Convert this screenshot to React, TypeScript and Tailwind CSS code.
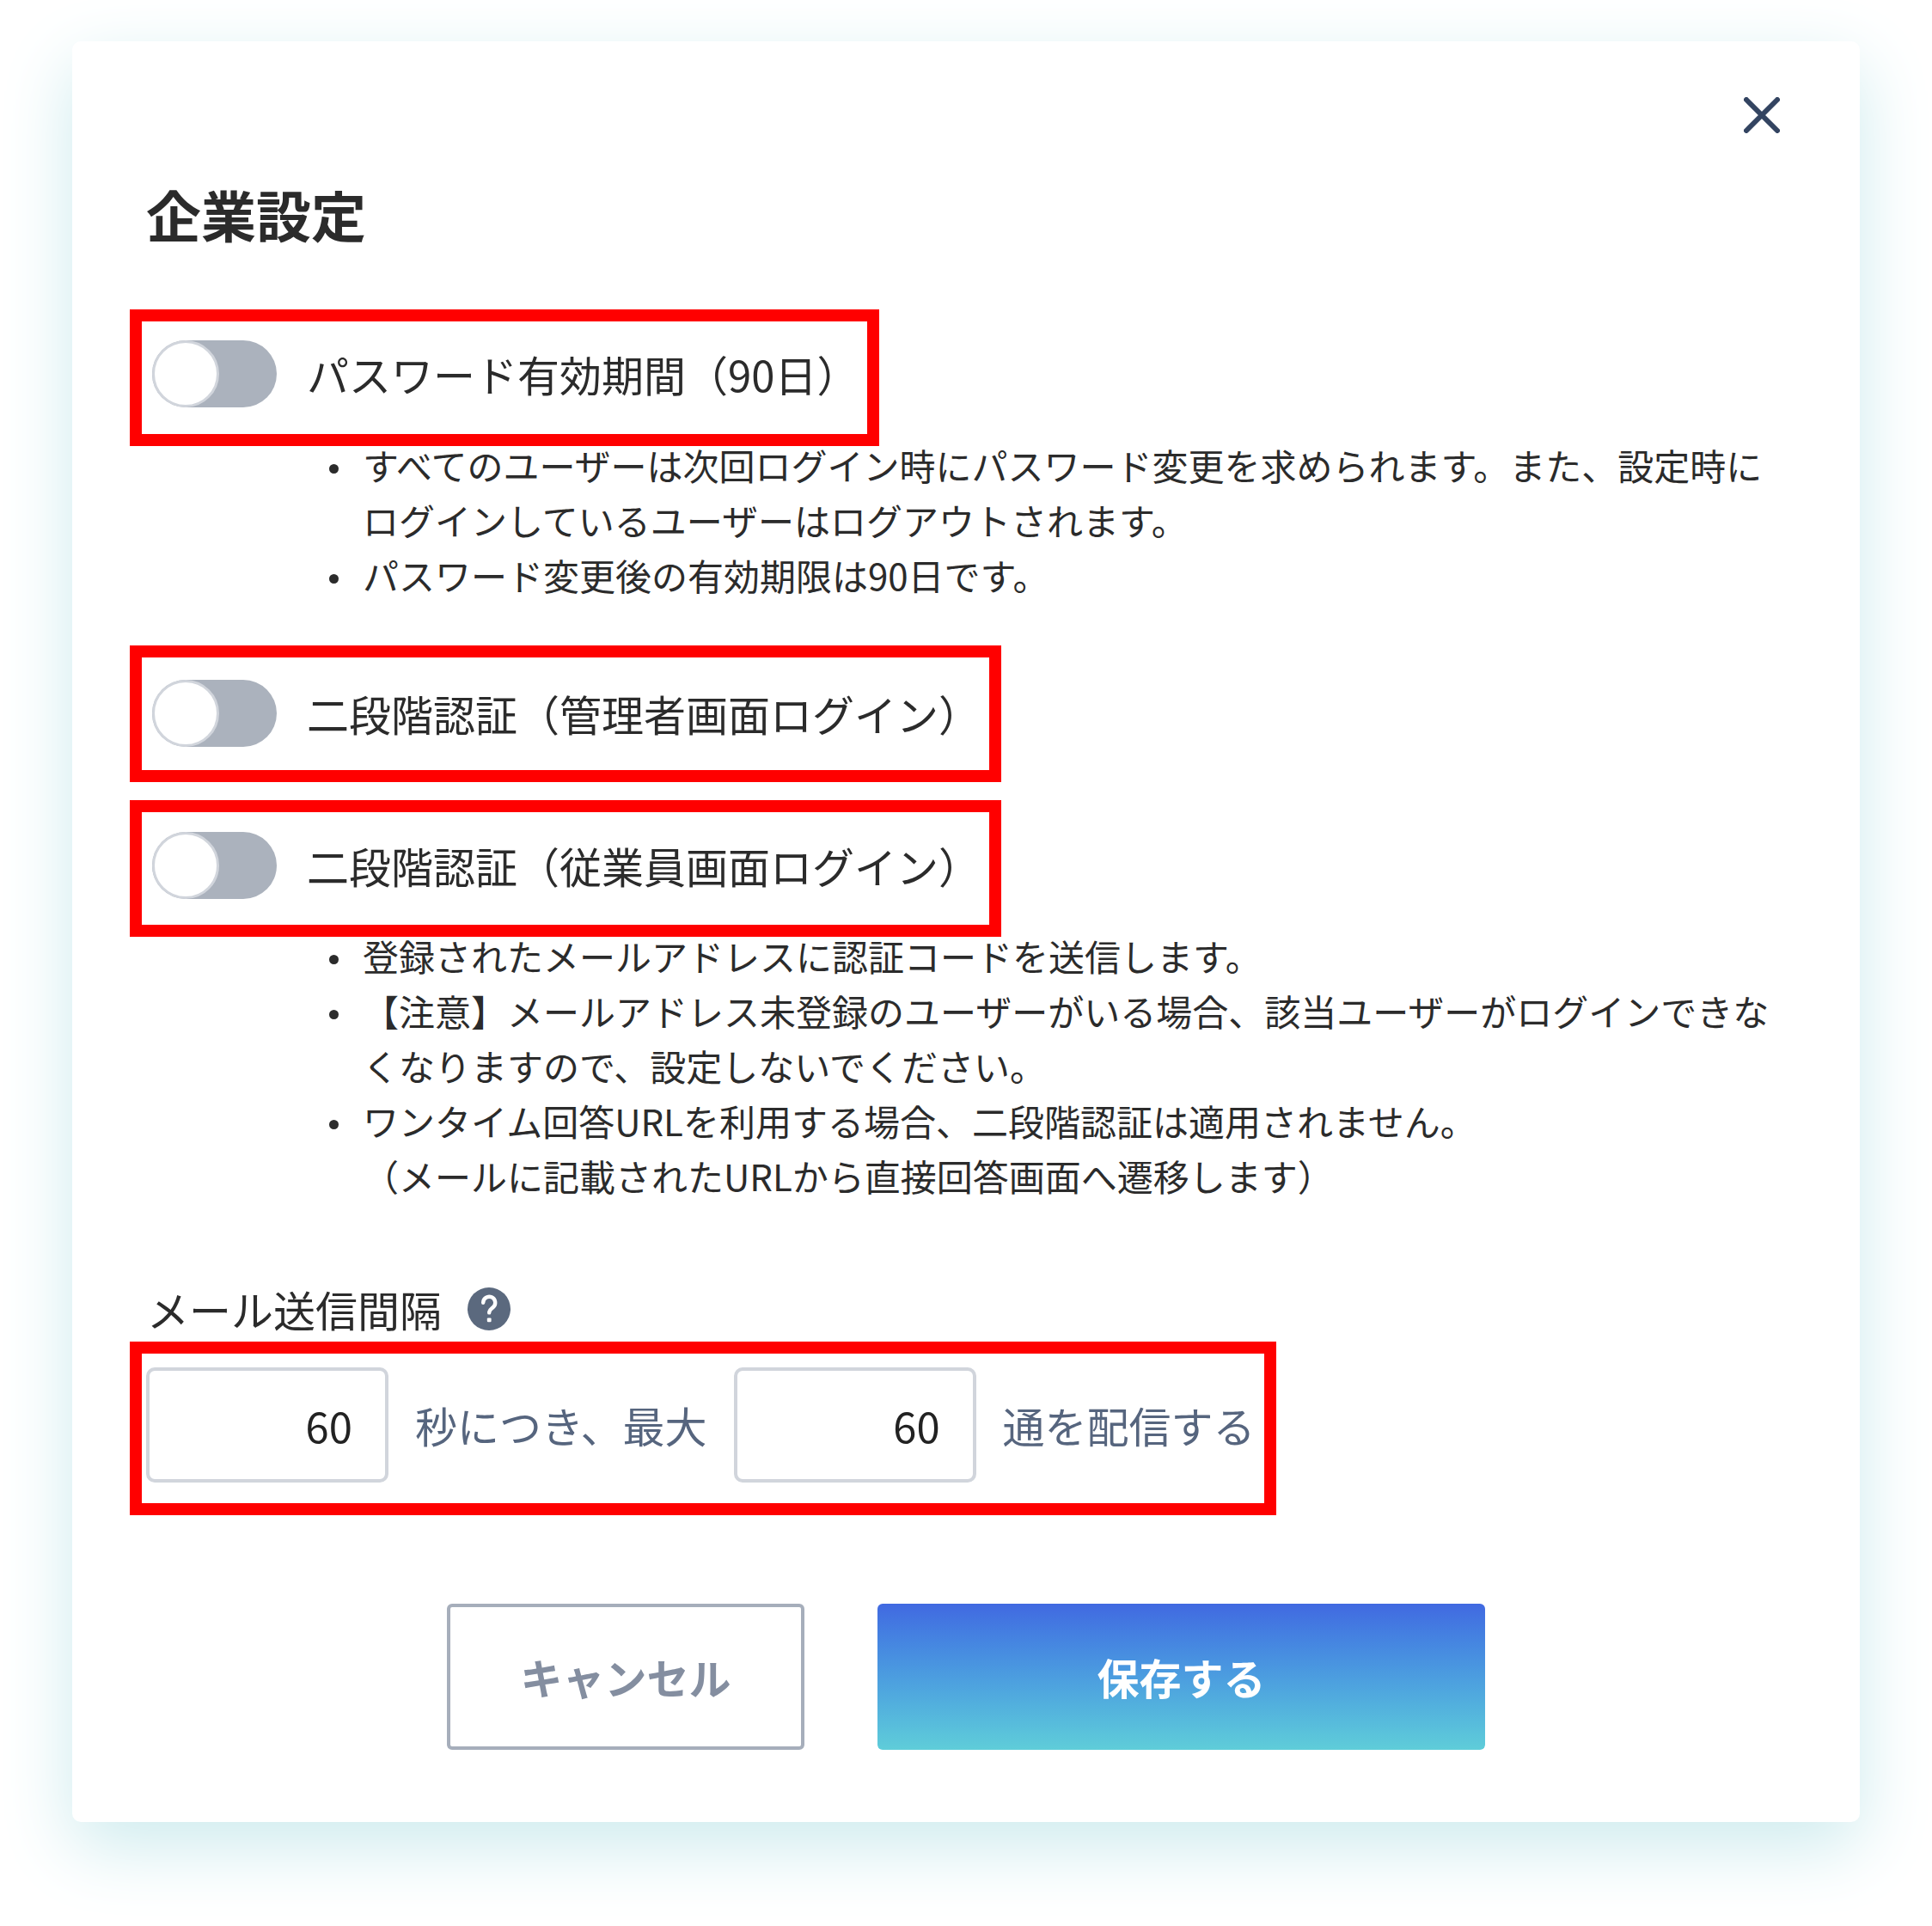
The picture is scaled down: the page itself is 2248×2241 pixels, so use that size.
import { ReactNode } from 'react';

interface SwitchRowProps {
  id: string;
  label: string;
  className: string;
}

interface NumberFieldProps {
  id: string;
  label: string;
  defaultValue: number;
}

const PASSWORD_NOTES = [
  'すべてのユーザーは次回ログイン時にパスワード変更を求められます。また、設定時にログインしているユーザーはログアウトされます。',
  'パスワード変更後の有効期限は90日です。',
];

const TWO_FACTOR_NOTES = [
  '登録されたメールアドレスに認証コードを送信します。',
  '【注意】メールアドレス未登録のユーザーがいる場合、該当ユーザーがログインできなくなりますので、設定しないでください。',
  'ワンタイム回答URLを利用する場合、二段階認証は適用されません。\n（メールに記載されたURLから直接回答画面へ遷移します）',
];

function Highlight({ className, children }: { className: string; children: ReactNode }) {
  return (
    <div className={`w-fit max-w-full border-[14px] border-[#ff0000] ${className}`}>{children}</div>
  );
}

function SwitchRow({ id, label, className }: SwitchRowProps) {
  return (
    <Highlight className={className}>
      <div className="flex h-[78px] items-center gap-[35px]">
        <span className="relative block h-[78px] w-[145px] shrink-0">
          <input
            id={id}
            type="checkbox"
            role="switch"
            className="peer block h-full w-full appearance-none rounded-full bg-[#abb2bd] checked:bg-[#4169e1]"
          />
          <span className="pointer-events-none absolute top-0 left-0 size-[78px] rounded-full border-[3px] border-[#d1d5dc] bg-white peer-checked:right-0 peer-checked:left-auto" />
        </span>
        <label htmlFor={id} className="text-[49px] leading-[72px]">
          {label}
        </label>
      </div>
    </Highlight>
  );
}

function NoteList({ notes }: { notes: string[] }) {
  return (
    <ul className="-mt-2.5 pr-5 pl-[232px] text-[42px] leading-[64px]">
      {notes.map((note) => (
        <li key={note} className="flex gap-7">
          <span className="mt-[31px] size-[11px] shrink-0 rounded-full bg-[#2b2b2b]" />
          <span className="whitespace-pre-line">{note}</span>
        </li>
      ))}
    </ul>
  );
}

function NumberField({ id, label, defaultValue }: NumberFieldProps) {
  return (
    <input
      id={id}
      type="text"
      inputMode="numeric"
      aria-label={label}
      defaultValue={defaultValue}
      className="h-[134px] w-[282px] rounded-[10px] border-4 border-[#d1d5dc] bg-white px-[38px] pb-0.5 text-right text-[49px] text-[#222222]"
    />
  );
}

function HelpIcon() {
  return (
    <svg viewBox="0 0 50 50" className="size-[50px]" fill="none" aria-hidden="true">
      <circle cx="25" cy="25" r="25" fill="#5b697e" />
      <path
        d="M18.2 17.8a7 7 0 1 1 11.6 5.2c-2.6 2.2-4.6 3.2-4.6 6.4"
        stroke="#fff"
        strokeWidth="4.4"
        strokeLinecap="round"
      />
      <rect x="22.8" y="35.4" width="4.8" height="4.8" rx="1.2" fill="#fff" />
    </svg>
  );
}

export default function App() {
  return (
    <main className="min-h-screen bg-white px-[84px] pt-12 pb-[120px] font-['Noto_Sans_CJK_JP',sans-serif] text-[#2b2b2b]">
      <section
        role="dialog"
        aria-labelledby="settings-title"
        className="flex flex-col rounded-[10px] bg-white px-[67px] pt-[58px] pb-[84px] shadow-[0_28px_84px_#cdebee]"
      >
        <button
          type="button"
          aria-label="閉じる"
          className="mr-[19px] flex size-14 items-center justify-center self-end"
        >
          <svg viewBox="0 0 42 42" className="size-[42px]" fill="none" aria-hidden="true">
            <path d="M3 3l36 36M39 3L3 39" stroke="#334461" strokeWidth="6" strokeLinecap="round" />
          </svg>
        </button>

        <h1 id="settings-title" className="mt-10 pl-[19px] text-[64px] leading-[92px] font-bold">
          企業設定
        </h1>

        <SwitchRow
          id="password-expiry"
          label="パスワード有効期間（90日）"
          className="mt-[66px] pt-[22px] pr-[10px] pb-[31px] pl-3"
        />
        <NoteList notes={PASSWORD_NOTES} />

        <SwitchRow
          id="two-factor-admin"
          label="二段階認証（管理者画面ログイン）"
          className="mt-[50px] pt-[26px] pr-[10px] pb-[27px] pl-3"
        />
        <SwitchRow
          id="two-factor-employee"
          label="二段階認証（従業員画面ログイン）"
          className="mt-[21px] pt-[23px] pr-[10px] pb-[30px] pl-3"
        />
        <NoteList notes={TWO_FACTOR_NOTES} />

        <div className="mt-[87px] mb-0.5 flex h-[72px] items-center gap-[30px] pl-5">
          <h2 className="text-[49px] leading-[72px]">メール送信間隔</h2>
          <button type="button" aria-label="ヘルプ">
            <HelpIcon />
          </button>
        </div>
        <Highlight className="pt-4 pr-[10px] pb-6 pl-[5px]">
          <div className="flex items-center gap-[31px] text-[49px] leading-[72px] text-[#56657e]">
            <NumberField id="interval-seconds" label="秒数" defaultValue={60} />
            <label htmlFor="interval-seconds">秒につき、最大</label>
            <NumberField id="max-mails" label="通数" defaultValue={60} />
            <label htmlFor="max-mails">通を配信する</label>
          </div>
        </Highlight>

        <div className="mt-[103px] flex justify-center gap-[85px] text-[49px] font-bold">
          <button
            type="button"
            className="h-[170px] w-[416px] rounded-md border-4 border-[#a6aebb] bg-white text-[#848ea0]"
          >
            キャンセル
          </button>
          <button
            type="button"
            className="h-[170px] w-[707px] rounded-md bg-linear-to-b from-[#4169e1] to-[#5fcdd9] text-white"
          >
            保存する
          </button>
        </div>
      </section>
    </main>
  );
}
